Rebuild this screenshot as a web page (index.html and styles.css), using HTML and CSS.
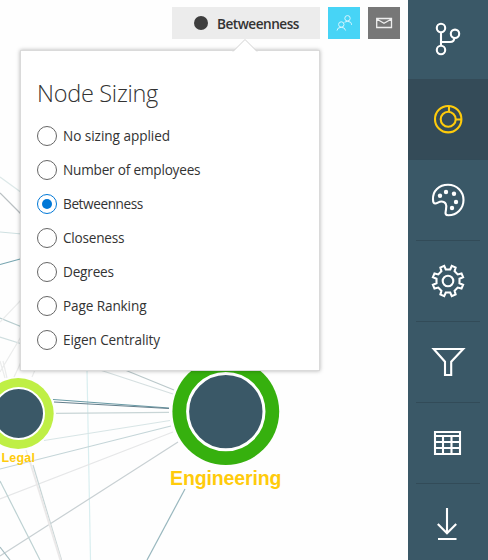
FILE: index.html
```
<!DOCTYPE html>
<html lang="en">
<head>
<meta charset="utf-8">
<title>Node Sizing</title>
<link rel="stylesheet" href="styles.css">
</head>
<body>
<div class="app">
  <main class="workspace">
    <svg class="graph" viewBox="0 0 408 560" aria-hidden="true">
      <g class="edges">
        <path stroke="#dce8e8" d="M0 177L22 193"/>
        <path stroke="#b9bfc2" d="M0 193L22 215"/>
        <path stroke="#cfe0e1" d="M0 232L22 234"/>
        <path stroke="#76a5b0" d="M0 264.500L22 258.500"/>
        <path stroke="#b8cdcf" d="M0 318L22 327"/>
        <path stroke="#cfdedf" d="M0 337L22 344"/>
        <path stroke="#ebecec" d="M0 322L22 299M0 361L5 378M3 361L7 378M0 372L22 335M14 377L22 360M32 377L35 370"/>
        <path stroke="#d9eef0" d="M87 370L90.500 560"/>
        <path stroke="#d5dfe0" d="M100 370L173 394"/>
        <path stroke="#bac8ca" d="M125 370L174 390"/>
        <path stroke="#6899a4" d="M53 399.500L169 408"/>
        <path stroke="#647f8c" d="M54 402L169 408.500"/>
        <path stroke="#c8d5d6" d="M56 413.300L169 412.300"/>
        <path stroke="#d8e5e6" d="M44 440.500L170 420.500"/>
        <path stroke="#c4d5d8" d="M0 469L171 426"/>
        <path stroke="#e6e7e8" d="M0 499L173 432"/>
        <path stroke="#c8d0d3" d="M0 556L178 442"/>
        <path stroke="#bdd1d2" d="M0 481L40 560"/>
        <path stroke="#a5bcc1" d="M0 547L10 560"/>
        <path stroke="#c7d5d6" d="M33 465L61.500 560"/>
        <path stroke="#ebe9e9" d="M26 450L60 560M30 461L61 560"/>
        <path stroke="#98b7be" d="M185 489L147 560"/>
      </g>
      <circle cx="18.200" cy="413.500" r="35.500" fill="#bfef45"/>
      <circle cx="18.600" cy="413.500" r="25.400" class="core core-small"/>
      <circle cx="225.800" cy="411.600" r="53.400" fill="#36b00e"/>
      <circle cx="225.800" cy="411.600" r="38.200" class="core"/>
      <text class="node-label" x="1.500" y="462" font-size="12.500" textLength="33.500">Legal</text>
      <text class="node-label" x="170" y="485" font-size="19.500" textLength="111.500">Engineering</text>
    </svg>

    <header class="toolbar">
      <button class="metric"><span class="metric-dot"></span><span class="metric-text">Betweenness</span></button>
      <button class="tool people">
        <svg viewBox="328 7 32 32"><circle cx="341.300" cy="24.500" r="2.700"/><path d="M337 30.500Q337.300 27.300 341.300 27.300Q345 27.300 345.600 30.500"/><circle cx="347.500" cy="18.300" r="2.700"/><path d="M344.500 22.200Q347.500 20.400 350.500 22.200Q351.400 23 351.600 24.800"/></svg>
      </button>
      <button class="tool mail">
        <svg viewBox="368 7 32 32"><path d="M376.700 18.500H391.500V27.500H376.700ZM376.700 19L384 23.200L391.500 19"/></svg>
      </button>
    </header>

    <section class="callout">
      <svg class="beak" viewBox="0 0 26 13"><path d="M1 12.500L13 .5L25 12.500"/></svg>
      <h1>Node Sizing</h1>
      <div class="options">
        <label class="option"><i class="radio"></i><span class="t1">No sizing applied</span></label>
        <label class="option"><i class="radio"></i><span class="t2">Number of employees</span></label>
        <label class="option"><i class="radio checked"></i><span class="t3">Betweenness</span></label>
        <label class="option"><i class="radio"></i><span class="t4">Closeness</span></label>
        <label class="option"><i class="radio"></i><span class="t5">Degrees</span></label>
        <label class="option"><i class="radio"></i><span class="t6">Page Ranking</span></label>
        <label class="option"><i class="radio"></i><span class="t7">Eigen Centrality</span></label>
      </div>
    </section>
  </main>

  <nav class="sidebar">
    <a class="item"><svg viewBox="408 -2 80 81"><circle cx="441" cy="28" r="4.200"/><circle cx="455" cy="33.800" r="4.200"/><circle cx="441" cy="50" r="4.200"/><path d="M441 32.500V45.500M441 42H450Q454.300 42 454.300 38"/></svg></a>
    <a class="item active"><svg viewBox="408 79 80 81"><circle cx="448.200" cy="119.200" r="13.200"/><circle cx="448.200" cy="119.200" r="7.500"/><path d="M449 106V112M455.500 119.500H461.500"/></svg></a>
    <a class="item"><svg viewBox="408 160 80 81"><path d="M433 199.500C432.500 191 439 184.800 448 184.800C457 184.800 463.500 191.500 463.500 200C463.500 209 456.500 215.300 448.500 215.300C444.500 215.300 445.500 212.500 446 209.500C447.200 205 445.500 201.500 441.500 201.500C438.500 201.500 437.500 203.500 435.300 203.500C433.500 203.500 433 201.500 433 199.500Z"/><g class="dots"><circle cx="440" cy="195.700" r="2.200"/><circle cx="446" cy="192" r="2.200"/><circle cx="454" cy="193.800" r="2.200"/><circle cx="456" cy="202" r="2.200"/><circle cx="452" cy="208" r="2.200"/></g></svg></a>
    <a class="item"><svg viewBox="-40 -40 80 81"><circle r="5.300"/><path d="M2.200-11.500L3.800-15.100L7.600-13.500L6.600-9.700L9.700-6.600L13.500-7.600L15.100-3.800L11.500-2.200V2.200L15.100 3.800L13.500 7.600L9.700 6.600L6.600 9.700L7.600 13.500L3.800 15.100L2.200 11.500H-2.200L-3.800 15.100L-7.600 13.500L-6.600 9.700L-9.700 6.600L-13.500 7.600L-15.100 3.800L-11.500 2.200V-2.200L-15.100-3.800L-13.500-7.600L-9.700-6.600L-6.600-9.700L-7.600-13.500L-3.800-15.100L-2.200-11.500Z"/></svg></a>
    <a class="item"><svg viewBox="408 322 80 81"><path d="M433.700 349H463.200L451.200 361.700V375H445V361.700Z"/></svg></a>
    <a class="item"><svg viewBox="408 403 80 81"><path d="M435 432H460V454H435ZM435 436H460M435 442H460M435 448H460M443 436V454M451.500 436V454"/></svg></a>
    <a class="item"><svg viewBox="408 484 80 81"><path d="M447 508V533M437.800 524L447 533.200L456.200 524M438 539H456.500"/></svg></a>
  </nav>
</div>
</body>
</html>
```
FILE: styles.css
```
* { box-sizing: border-box; }
body { margin: 0; overflow: hidden; background: #fefefe; color: #333; font-family: "Open Sans", "Noto Sans", sans-serif; }
button { border: 0; padding: 0; font: inherit; color: inherit; }
svg { display: block; fill: none; }
.app { display: grid; grid-template-columns: 408px 80px; height: 560px; overflow: hidden; }
.workspace { position: relative; overflow: hidden; }

.graph { position: absolute; inset: 0; width: 408px; height: 560px; }
.edges { stroke-width: 1.200; }
.core { fill: #3a5867; stroke: #fff; stroke-width: 3; }
.core-small { stroke-width: 2; }
.node-label { fill: #ffcb0b; font-family: "Liberation Sans", sans-serif; font-weight: 700; }

.toolbar { position: relative; display: flex; justify-content: flex-end; gap: 8px; padding: 7px 8px 0 0; }
.metric { display: flex; align-items: center; width: 148px; height: 32px; padding-left: 22px; gap: 9px; background: #ececec; font-size: 13.600px; font-weight: 600; }
.metric-dot { width: 14px; height: 14px; border-radius: 50%; background: #3e3e3e; }
.metric-text { letter-spacing: -.48px; white-space: nowrap; }
.tool { width: 32px; height: 32px; }
.tool svg { width: 32px; height: 32px; stroke: #d8f6ff; stroke-width: 1; }
.people { background: #47d4f6; }
.mail { background: #777; }
.mail svg { stroke: #eee; stroke-width: 1.300; }

.callout { position: relative; width: 298px; height: 319px; margin: 12px 0 0 21px; padding: 24px 16px; background: #fff; box-shadow: 0 0 0 1px #dadada, 0 0 4px 1px rgba(0, 0, 0, .3); }
.beak { position: absolute; left: 211px; top: -12px; width: 26px; height: 13px; fill: #fff; stroke: #d2d2d2; }
h1 { margin: 0; height: 36px; font-size: 23.500px; line-height: 36px; font-weight: 300; letter-spacing: -.28px; white-space: nowrap; }
.options { display: grid; grid-auto-rows: 34px; margin-top: 8px; }
.option { display: flex; align-items: center; gap: 6px; font-size: 13.600px; line-height: 18px; white-space: nowrap; }
.option span { padding-bottom: 1px; }
.t1 { letter-spacing: -.05px; }
.t2 { letter-spacing: -.2px; }
.t3 { letter-spacing: -.4px; }
.t4 { letter-spacing: -.22px; }
.t5 { letter-spacing: -.2px; }
.t6, .t7 { letter-spacing: -.12px; }
.radio { flex: none; display: grid; place-items: center; width: 20px; height: 20px; border: 1px solid #666; border-radius: 50%; background: #fff; }
.checked { border-color: #0078d7; }
.checked::before { content: ""; width: 10px; height: 10px; border-radius: 50%; background: #0078d7; }

.sidebar { display: flex; flex-direction: column; margin-top: -2px; background: #3a5867; }
.item { position: relative; flex: none; height: 81px; }
.item svg { width: 80px; height: 81px; stroke: #fff; stroke-width: 2.100; }
.item:not(:first-child):not(:last-child)::after { content: ""; position: absolute; left: 8px; right: 8px; bottom: 0; height: 1px; background: #324b58; }
.active { background: #344b58; }
.item.active svg { stroke: #ffcb0b; }
.item .dots { fill: #fff; stroke: none; }
```
